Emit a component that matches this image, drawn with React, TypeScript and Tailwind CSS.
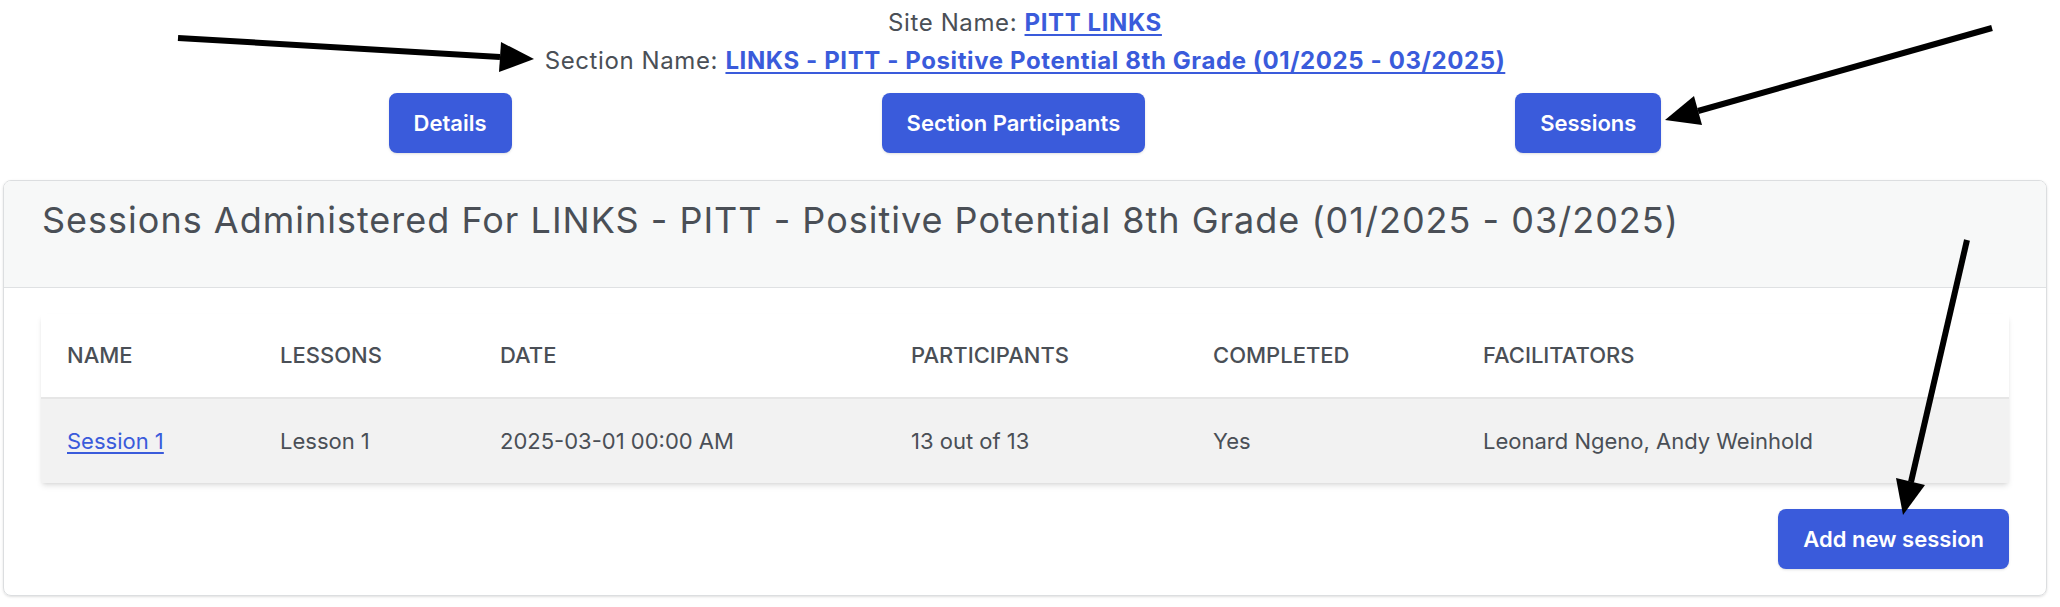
import React from "react";

const blue = "#3a5bdb";

const arrows = [
  { tail: [178, 38], base: [500, 57], head: "534,59 499,72 501,42" },
  { tail: [1992, 28], base: [1698, 111], head: "1665,120 1694,96 1702,125" },
  { tail: [1967, 240], base: [1911, 482], head: "1903,515 1925,485 1896,478" },
];

const columns = [
  { label: "Name", w: "w-[213px]" },
  { label: "Lessons", w: "w-[220px]" },
  { label: "Date", w: "w-[411px]" },
  { label: "Participants", w: "w-[302px]" },
  { label: "Completed", w: "w-[270px]" },
  { label: "Facilitators", w: "" },
];

const NavButton = ({ children }: { children: React.ReactNode }) => (
  <button className="h-[60px] px-[25px] rounded-[8px] bg-[#3a5bdb] text-white text-[22px] font-semibold shadow-sm">
    {children}
  </button>
);

const App = () => {
  return (
    <div className="relative w-[2060px] h-[607px] bg-white overflow-hidden font-['Inter',sans-serif] text-[#4a4f56]">
      <div className="ml-[3px] w-[2044px]">
        {/* site / section header */}
        <div className="pt-[4px] text-center text-[24px] leading-[38px] tracking-[0.6px]">
          <p>
            Site Name:{" "}
            <a href="#" className="font-bold underline underline-offset-[3px]" style={{ color: blue }}>
              PITT LINKS
            </a>
          </p>
          <p>
            Section Name:{" "}
            <a href="#" className="font-bold underline underline-offset-[3px]" style={{ color: blue }}>
              LINKS - PITT - Positive Potential 8th Grade (01/2025 - 03/2025)
            </a>
          </p>
        </div>

        <div className="mt-[13px] flex justify-center gap-[370px]">
          <NavButton>Details</NavButton>
          <NavButton>Section Participants</NavButton>
          <NavButton>Sessions</NavButton>
        </div>

        {/* sessions card */}
        <div className="mt-[27px] border border-[#dcdee0] rounded-[8px] shadow-sm overflow-hidden">
          <div className="bg-[#f7f8f8] border-b border-[#dfe1e3] px-[38px] pt-[20px] pb-[47px]">
            <h2 className="text-[36px] leading-[39px] font-normal tracking-[1px]">
              Sessions Administered For LINKS - PITT - Positive Potential 8th Grade (01/2025 - 03/2025)
            </h2>
          </div>
          <div className="px-[37px] pt-[26px] pb-[26px]">
            <table className="w-full border-collapse shadow-md text-[22px]">
              <thead>
                <tr className="bg-white border-b-2 border-[#e6e6e6]">
                  {columns.map((c) => (
                    <th key={c.label} className={`${c.w} h-[84px] pl-[26px] text-left font-medium uppercase`}>
                      {c.label}
                    </th>
                  ))}
                </tr>
              </thead>
              <tbody>
                <tr className="bg-[#f2f2f2]">
                  <td className="h-[85px] pl-[26px]">
                    <a href="#" className="underline underline-offset-[3px]" style={{ color: blue }}>
                      Session 1
                    </a>
                  </td>
                  <td className="pl-[26px]">Lesson 1</td>
                  <td className="pl-[26px]">2025-03-01 00:00 AM</td>
                  <td className="pl-[26px]">13 out of 13</td>
                  <td className="pl-[26px]">Yes</td>
                  <td className="pl-[26px]">Leonard Ngeno, Andy Weinhold</td>
                </tr>
              </tbody>
            </table>
            <div className="mt-[26px] flex justify-end">
              <button className="h-[60px] px-[25px] rounded-[8px] bg-[#3a5bdb] text-white text-[22px] font-semibold shadow-sm">
                Add new session
              </button>
            </div>
          </div>
        </div>
      </div>

      {/* annotation arrows */}
      <svg className="absolute inset-0 pointer-events-none" width="2060" height="607">
        {arrows.map((a, i) => (
          <g key={i}>
            <line x1={a.tail[0]} y1={a.tail[1]} x2={a.base[0]} y2={a.base[1]} stroke="#000" strokeWidth="6" />
            <polygon points={a.head} fill="#000" />
          </g>
        ))}
      </svg>
    </div>
  );
};

export default App;
